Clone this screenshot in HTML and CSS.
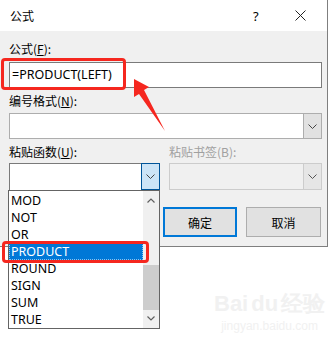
FILE: index.html
```html
<!DOCTYPE html>
<html>
<head>
  <meta charset="utf-8">
  <title>公式</title>
  <link rel="stylesheet" href="styles.css">
</head>
<body>
  <div class="dialog">
    <div class="titlebar">
      <span class="title">公式</span>
      <span class="help">?</span>
      <span class="close">
        <svg width="11" height="11" viewBox="0 0 11 11"><path d="M0.5 0.5L10.5 10.5M10.5 0.5L0.5 10.5" stroke="#222" stroke-width="1"/></svg>
      </span>
    </div>
    <div class="content">
      <div class="label label-first">公式(<u>F</u>):</div>
      <div class="textbox">=PRODUCT(LEFT)</div>

      <div class="label label-second">编号格式(<u>N</u>):</div>
      <div class="combo">
        <div class="combo-value"></div>
        <div class="combo-btn">
          <svg width="9" height="5" viewBox="0 0 9 5"><path d="M0.5 0.5L4.5 4.5L8.5 0.5" fill="none" stroke="#444"/></svg>
        </div>
      </div>

      <div class="pair">
        <div class="col">
          <div class="label">粘贴函数(<u>U</u>):</div>
          <div class="combo combo-open">
            <div class="combo-value"></div>
            <div class="combo-btn">
              <svg width="9" height="5" viewBox="0 0 9 5"><path d="M0.5 0.5L4.5 4.5L8.5 0.5" fill="none" stroke="#444"/></svg>
            </div>
          </div>
        </div>
        <div class="col col-right">
          <div class="label label-disabled">粘贴书签(B):</div>
          <div class="combo combo-disabled">
            <div class="combo-value"></div>
            <div class="combo-btn">
              <svg width="9" height="5" viewBox="0 0 9 5"><path d="M0.5 0.5L4.5 4.5L8.5 0.5" fill="none" stroke="#555"/></svg>
            </div>
          </div>
        </div>
      </div>

      <div class="buttons">
        <button class="btn btn-default">确定</button>
        <button class="btn">取消</button>
      </div>
    </div>
  </div>

  <!-- 下拉列表浮在对话框上 -->
  <div class="droplist">
    <ul class="items">
      <li>MOD</li>
      <li>NOT</li>
      <li>OR</li>
      <li class="selected">PRODUCT</li>
      <li>ROUND</li>
      <li>SIGN</li>
      <li>SUM</li>
      <li>TRUE</li>
    </ul>
    <div class="scrollbar">
      <svg class="sb-up" width="8" height="5" viewBox="0 0 8 5"><path d="M0.5 4.5L4 1L7.5 4.5" fill="none" stroke="#606060" stroke-width="1.2"/></svg>
      <div class="sb-thumb"></div>
      <svg class="sb-down" width="8" height="5" viewBox="0 0 8 5"><path d="M0.5 0.5L4 4L7.5 0.5" fill="none" stroke="#606060" stroke-width="1.2"/></svg>
    </div>
  </div>

  <!-- 红色标注 -->
  <div class="mark mark-formula"></div>
  <div class="mark mark-item"></div>
  <svg class="arrow" width="336" height="344" viewBox="0 0 336 344">
    <path d="M134 79L149 87L144 90L165 131L139 94L134 97Z" fill="#f5271f"/>
  </svg>

  <div class="watermark">
    <div class="wm-big">Bai<span class="wm-du">du</span>经验</div>
    <div class="wm-small">jingyan.baidu.com</div>
  </div>
</body>
</html>
```

FILE: styles.css
```css
html, body{
  margin: 0;
  padding: 0;
  background: #fff;
}
body{
  position: relative;
  width: 336px;
  height: 344px;
  overflow: hidden;
  font-family: "Noto Sans CJK SC", "Noto Sans", sans-serif;
  font-size: 12px;
  color: #000;
}
u{
  text-decoration: underline;
  text-underline-offset: 1px;
}
.dialog{
  width: 327px;
  border-right: 1px solid #7f7f7f;
  border-bottom: 1px solid #7f7f7f;
}
.titlebar{
  height: 31px;
  background: #fff;
  display: flex;
  align-items: center;
  padding-left: 10px;
}
.title{
  flex: 1;
  font-size: 12px;
}
.help{
  width: 14px;
  font-family: "Noto Sans", sans-serif;
  font-size: 13px;
  margin-right: 28px;
}
.close{
  display: flex;
  margin-right: 21px;
}
.content{
  background: #f0f0f0;
  height: 215px;
  padding: 8px 5px 0 9px;
  box-sizing: border-box;
}
.label{
  height: 20px;
  line-height: 20px;
  font-size: 12px;
}
.label-first{
  margin-bottom: 3px;
}
.label-second{
  margin-top: 3px;
  margin-bottom: 2px;
}
.label-disabled{
  color: #a0a0a0;
}
.textbox{
  height: 26px;
  box-sizing: border-box;
  border: 1px solid #7a7a7a;
  background: #fff;
  line-height: 24px;
  padding-left: 2px;
  font-family: "Noto Sans", sans-serif;
  font-size: 12.5px;
}
.combo{
  display: flex;
  height: 26px;
  box-sizing: border-box;
  border: 1px solid #adadad;
  background: #fff;
}
.combo-value{
  flex: 1;
}
.combo-btn{
  width: 17px;
  background: #e1e1e1;
  border-left: 1px solid #adadad;
  display: flex;
  align-items: center;
  justify-content: center;
}
.combo-open{
  height: 27px;
  border-color: #7a7a7a;
  border-bottom: 0;
}
.combo-open .combo-btn{
  background: #cce4f7;
  border: 1px solid #005499;
  margin: -1px -1px 0 0;
}
.combo-disabled{
  height: 27px;
  background: #f0f0f0;
  border-color: #cccccc;
}
.combo-disabled .combo-btn{
  background: #e6e6e6;
  border-left-color: #cccccc;
}
.pair{
  display: flex;
  gap: 9px;
  margin-top: 3px;
}
.pair .label{
  margin-bottom: 1px;
}
.col{
  width: 151px;
}
.col-right{
  width: 153px;
}
.buttons{
  display: flex;
  justify-content: flex-end;
  gap: 9px;
  margin-top: 17px;
  padding-right: 1px;
}
.btn{
  height: 30px;
  width: 75px;
  box-sizing: border-box;
  border: 1px solid #adadad;
  background: #e1e1e1;
  font-family: "Noto Sans CJK SC", sans-serif;
  font-size: 12px;
  padding: 0;
  color: #000;
}
.btn-default{
  width: 74px;
  border: 2px solid #0078d7;
}

/* 下拉列表 */
.droplist{
  position: absolute;
  left: 8px;
  top: 190px;
  width: 152px;
  height: 139px;
  box-sizing: border-box;
  border: 1px solid #646464;
  background: #fff;
  display: flex;
}
.items{
  list-style: none;
  margin: 0;
  padding: 1px 0 0 0;
  flex: 1;
}
.items li{
  height: 17px;
  line-height: 17px;
  padding-left: 2px;
  font-family: "Noto Sans", sans-serif;
  font-size: 12.5px;
}
.items li.selected{
  background: #0078d7;
  color: #fff;
  outline: 1px dotted #8cc4f0;
  outline-offset: -1px;
}
.scrollbar{
  width: 16px;
  background: #f0f0f0;
  display: flex;
  flex-direction: column;
  align-items: center;
}
.sb-up{
  margin-top: 7px;
}
.sb-thumb{
  width: 16px;
  height: 45px;
  background: #cdcdcd;
  margin-top: 62px;
}
.sb-down{
  margin-top: 6px;
}

/* 红框标注 */
.mark{
  position: absolute;
  border: 3px solid #f5271f;
  border-radius: 4px;
  box-sizing: border-box;
}
.mark-formula{
  left: 1px;
  top: 58px;
  width: 125px;
  height: 32px;
}
.mark-item{
  left: 2px;
  top: 241px;
  width: 147px;
  height: 22px;
}
.arrow{
  position: absolute;
  left: 0;
  top: 0;
}

.watermark{
  position: absolute;
  left: 214px;
  top: 290px;
  color: #f1f1f1;
  font-family: "Liberation Sans", sans-serif;
  text-align: center;
}
.wm-big{
  font-size: 22px;
  font-weight: bold;
  line-height: 28px;
}
.wm-du{
  margin: 0 3px;
}
.wm-small{
  font-size: 12px;
  line-height: 16px;
}
```
